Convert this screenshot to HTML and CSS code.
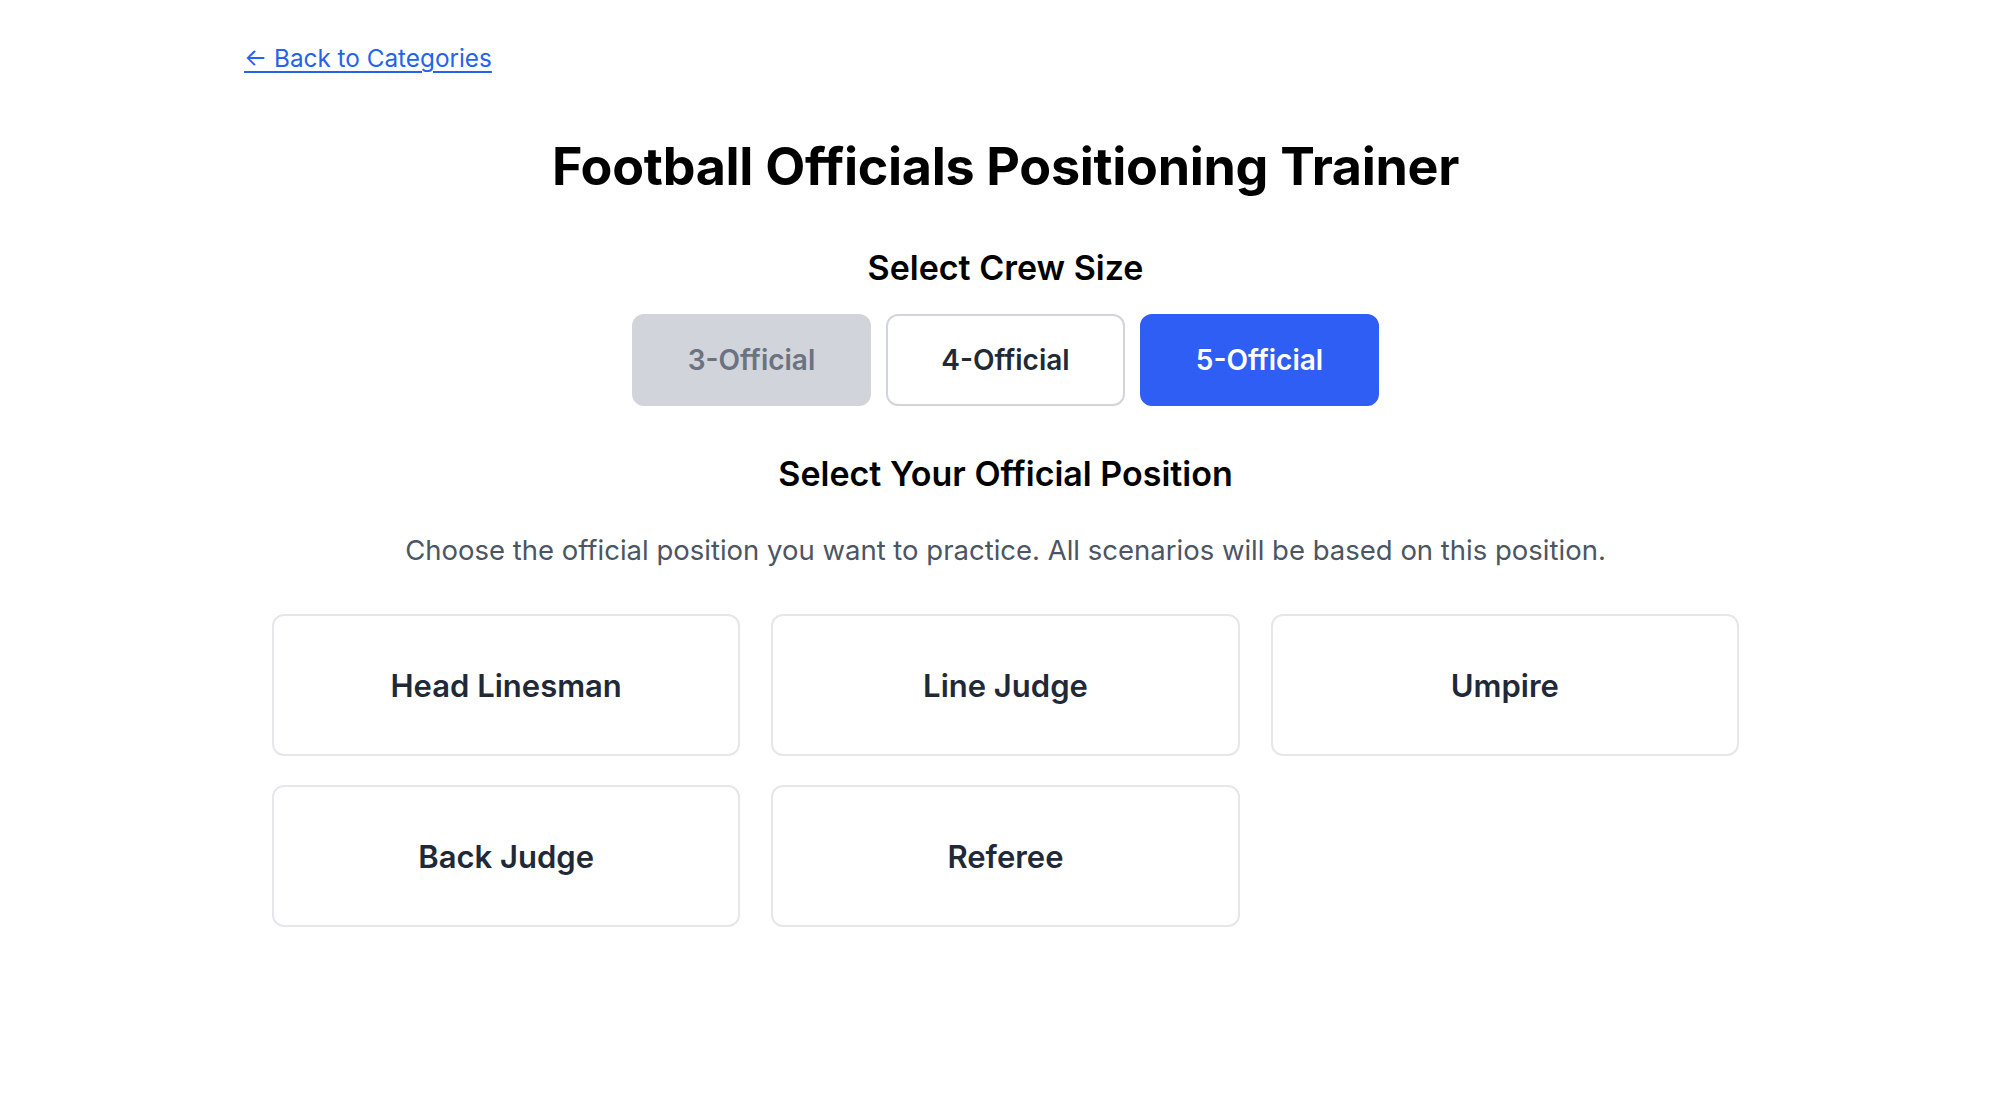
FILE: index.html
```html
<!DOCTYPE html>
<html lang="en">
<head>
<meta charset="utf-8">
<title>Football Officials Positioning Trainer</title>
<link rel="stylesheet" href="styles.css">
</head>
<body>
<div class="page">
  <a class="back-link" href="#">← Back to Categories</a>
  <h1 class="title">Football Officials Positioning Trainer</h1>
  <h2 class="section-title crew-title">Select Crew Size</h2>
  <div class="crew-buttons">
    <button class="crew-btn crew-btn--disabled">3-Official</button>
    <button class="crew-btn crew-btn--outline">4-Official</button>
    <button class="crew-btn crew-btn--active">5-Official</button>
  </div>
  <h2 class="section-title position-title">Select Your Official Position</h2>
  <p class="description">Choose the official position you want to practice. All scenarios will be based on this position.</p>
  <div class="positions">
    <button class="position-card">Head Linesman</button>
    <button class="position-card">Line Judge</button>
    <button class="position-card">Umpire</button>
    <button class="position-card">Back Judge</button>
    <button class="position-card">Referee</button>
  </div>
</div>
</body>
</html>
```

FILE: styles.css
```css
* { box-sizing: border-box; }
html, body { margin: 0; padding: 0; background: #ffffff; }
body {
  font-family: Inter, "Noto Sans", "Liberation Sans", sans-serif;
  color: #000;
}
.page {
  width: 1523px;
  margin-left: 244px;
  padding-top: 41px;
  display: flex;
  flex-direction: column;
  align-items: center;
}
.back-link {
  align-self: flex-start;
  font-size: 24.3px;
  line-height: 34px;
  color: #2563eb;
  text-decoration: underline;
  text-underline-offset: 4px;
  text-decoration-thickness: 2px;
}
.title {
  margin: 60px 0 0;
  font-size: 52px;
  line-height: 64px;
  font-weight: 700;
  letter-spacing: -0.3px;
}
.section-title {
  margin: 0;
  font-size: 34px;
  line-height: 44px;
  font-weight: 600;
}
.crew-title { margin-top: 47px; }
.crew-buttons {
  display: flex;
  gap: 15px;
  margin-top: 24px;
}
.crew-btn {
  width: 239px;
  height: 92px;
  border-radius: 12px;
  border: 2px solid transparent;
  font-family: inherit;
  font-size: 28px;
  font-weight: 600;
  cursor: pointer;
}
.crew-btn--disabled { background: #d1d5db; color: #6b7280; border-color: #d1d5db; }
.crew-btn--outline { background: #fff; color: #1f2937; border-color: #d1d5db; }
.crew-btn--active { background: #2f5ef5; color: #fff; border-color: #2f5ef5; }
.position-title { margin-top: 46px; }
.description {
  margin: 34px 0 0;
  font-size: 27.5px;
  line-height: 40px;
  color: #4b5563;
}
.positions {
  align-self: stretch;
  margin: 44px 28px 0;
  display: grid;
  grid-template-columns: repeat(3, 1fr);
  gap: 29px 31px;
}
.position-card {
  height: 142px;
  background: #fff;
  border: 2px solid #e5e7eb;
  border-radius: 12px;
  font-family: inherit;
  font-size: 31px;
  font-weight: 600;
  color: #1f2937;
  cursor: pointer;
}
```
